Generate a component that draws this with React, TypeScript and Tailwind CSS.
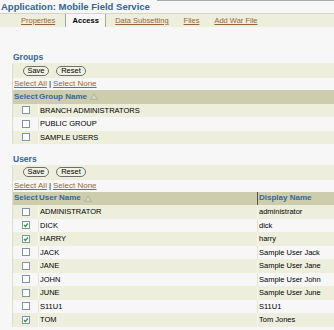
import React from 'react';

const groups = [
  { name: 'BRANCH ADMINISTRATORS', checked: false },
  { name: 'PUBLIC GROUP', checked: false },
  { name: 'SAMPLE USERS', checked: false },
];

const users = [
  { name: 'ADMINISTRATOR', display: 'administrator', checked: false },
  { name: 'DICK', display: 'dick', checked: true },
  { name: 'HARRY', display: 'harry', checked: true },
  { name: 'JACK', display: 'Sample User Jack', checked: false },
  { name: 'JANE', display: 'Sample User Jane', checked: false },
  { name: 'JOHN', display: 'Sample User John', checked: false },
  { name: 'JUNE', display: 'Sample User June', checked: false },
  { name: 'S11U1', display: 'S11U1', checked: false },
  { name: 'TOM', display: 'Tom Jones', checked: true },
];

function Checkbox({ checked }: { checked: boolean }) {
  return (
    <span className="flex h-[8px] w-[8px] items-center justify-center border border-[#7f92ad] bg-white">
      {checked && (
        <svg width="6" height="6" viewBox="0 0 6 6">
          <path d="M1 3 L2.4 4.5 L5 1.5" fill="none" stroke="#2a9a2a" strokeWidth="1.2" />
        </svg>
      )}
    </span>
  );
}

function SortArrow() {
  return (
    <svg width="8" height="7" viewBox="0 0 8 7" className="ml-[3px]">
      <path d="M4 0.8 L7.3 6.3 L0.7 6.3 Z" fill="#d8d8c4" stroke="#b2b29c" strokeWidth="1" />
    </svg>
  );
}

function Toolbar() {
  return (
    <>
      <div className="flex h-[15px] items-center gap-[7px] bg-[#eeeedd] pl-[10px]">
        <button className="flex h-[10px] w-[26px] items-center justify-center rounded-full border border-[#6f6f6f] bg-[#f1f1e4] text-[7.5px] leading-none text-black">
          Save
        </button>
        <button className="flex h-[10px] w-[30px] items-center justify-center rounded-full border border-[#6f6f6f] bg-[#f1f1e4] text-[7.5px] leading-none text-black">
          Reset
        </button>
      </div>
      <div className="flex h-[12px] items-center pl-[1px] text-[8px] leading-none">
        <span className="text-[#996633] underline">Select All</span>
        <span className="mx-[2px] text-black">|</span>
        <span className="text-[#996633] underline">Select None</span>
      </div>
    </>
  );
}

export default function App() {
  return (
    <div className="h-[330px] w-[334px] overflow-hidden bg-[#f7f7f7] font-['Liberation_Sans',Arial,sans-serif]">
      {/* Title */}
      <div className="flex h-[13px]">
        <h1 className="pl-[1px] text-[9.5px] font-bold leading-[13px] text-[#336699]">
          Application: Mobile Field Service
        </h1>
        <div className="ml-[7px] flex-1 self-start border-t border-[#a8a8a8]" />
      </div>

      {/* Tabs */}
      <div className="flex h-[14px] items-stretch border-t border-[#d6d6c2] bg-[#eeeedd] pl-[21px] text-[7.5px]">
        <span className="flex items-center text-[#996633] underline">Properties</span>
        <span className="ml-[10px] flex w-[41px] items-center justify-center border-x border-[#a9a990] bg-[#f7f7f7] font-bold text-black">
          Access
        </span>
        <span className="ml-[9px] flex items-center text-[#996633] underline">Data Subsetting</span>
        <span className="ml-[15px] flex items-center text-[#996633] underline">Files</span>
        <span className="ml-[15px] flex items-center text-[#996633] underline">Add War File</span>
      </div>

      {/* Groups */}
      <h2 className="mt-[25px] h-[10px] pl-[13px] text-[8.5px] font-bold leading-[10px] text-[#336699]">Groups</h2>
      <div className="ml-[12px] mt-[1px] border-l border-[#deded0]">
        <Toolbar />
        <div className="flex h-[13.5px] items-center bg-[#cdcdae] text-[8px] font-bold text-[#336699]">
          <span className="w-[25px] pl-[1px]">Select</span>
          <span className="flex items-center pl-[1px]">
            Group Name
            <SortArrow />
          </span>
        </div>
        {groups.map((g, i) => {
          const beige = i % 2 === 0;
          return (
            <div
              key={g.name}
              className={`flex h-[13.5px] items-stretch text-[7.5px] text-black ${beige ? 'bg-[#eeeedd]' : 'bg-[#f7f7f7]'}`}
            >
              <span className="flex w-[25px] items-center justify-center">
                <Checkbox checked={g.checked} />
              </span>
              <span
                className={`flex flex-1 items-center border-l pl-[1px] ${beige ? 'border-[#f8f8f2]' : 'border-[#e4e4d2]'}`}
              >
                {g.name}
              </span>
            </div>
          );
        })}
      </div>

      {/* Users */}
      <h2 className="mt-[9.5px] h-[10px] pl-[13px] text-[8.5px] font-bold leading-[10px] text-[#336699]">Users</h2>
      <div className="ml-[12px] mt-[1px] border-l border-[#deded0]">
        <Toolbar />
        <div className="flex h-[13.5px] items-stretch bg-[#cdcdae] text-[8px] font-bold text-[#336699]">
          <span className="flex w-[25px] items-center pl-[1px]">Select</span>
          <span className="flex w-[219px] items-center pl-[1px]">
            User Name
            <SortArrow />
          </span>
          <span className="flex flex-1 items-center border-l border-[#555548] pl-[1px]">Display Name</span>
        </div>
        {users.map((u, i) => {
          const beige = i % 2 === 0;
          const line = beige ? 'border-[#f8f8f2]' : 'border-[#e4e4d2]';
          return (
            <div
              key={u.name}
              className={`flex h-[13.5px] items-stretch text-[7.5px] text-black ${beige ? 'bg-[#eeeedd]' : 'bg-[#f7f7f7]'}`}
            >
              <span className="flex w-[25px] items-center justify-center">
                <Checkbox checked={u.checked} />
              </span>
              <span className={`flex w-[219px] items-center border-l pl-[1px] ${line}`}>{u.name}</span>
              <span className={`flex flex-1 items-center border-l pl-[1px] ${line}`}>{u.display}</span>
            </div>
          );
        })}
      </div>
    </div>
  );
}
